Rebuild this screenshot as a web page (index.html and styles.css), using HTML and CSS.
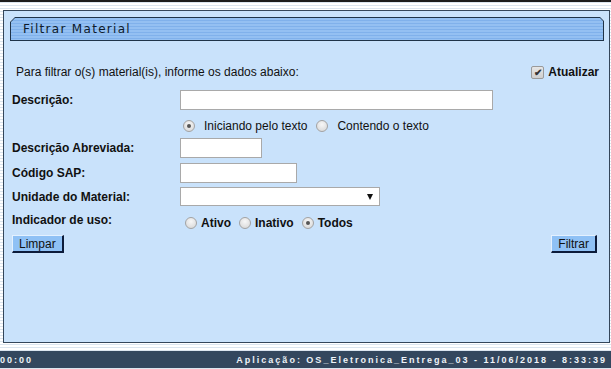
FILE: index.html
```html
<!DOCTYPE html>
<html lang="pt-BR">
<head>
  <meta charset="UTF-8">
  <meta name="viewport" content="width=device-width, initial-scale=1.0">
  <title>Filtrar Material</title>
  <link rel="stylesheet" href="styles.css">
</head>
<body>
  <div class="topline"></div>

  <div class="panel">
    <div class="tab">
      <div class="tab-inner">Filtrar Material</div>
    </div>

    <div class="intro-row">
      <span>Para filtrar o(s) material(is), informe os dados abaixo:</span>
      <label class="check"><span class="checkbox">&#10004;</span>Atualizar</label>
    </div>

    <div class="form">
      <div class="row row-desc">
        <span class="label">Descrição:</span>
        <span class="input input-desc"></span>
      </div>
      <div class="row row-mode">
        <span class="label"></span>
        <span class="radio on"></span><span class="opt">Iniciando pelo texto</span>
        <span class="radio"></span><span class="opt">Contendo o texto</span>
      </div>
      <div class="row row-abrev">
        <span class="label">Descrição Abreviada:</span>
        <span class="input input-abrev"></span>
      </div>
      <div class="row row-sap">
        <span class="label">Código SAP:</span>
        <span class="input input-sap"></span>
      </div>
      <div class="row row-unit">
        <span class="label">Unidade do Material:</span>
        <span class="select"><span class="arrow"></span></span>
      </div>
      <div class="row row-use">
        <span class="label label-use">Indicador de uso:</span>
        <span class="use-options">
          <span class="radio"></span><span class="opt-bold">Ativo</span>
          <span class="radio"></span><span class="opt-bold">Inativo</span>
          <span class="radio on"></span><span class="opt-bold">Todos</span>
        </span>
      </div>
    </div>

    <div class="actions">
      <button class="btn">Limpar</button>
      <button class="btn">Filtrar</button>
    </div>
  </div>

  <div class="statusbar">
    <span>00:00</span>
    <span>Aplicação: OS_Eletronica_Entrega_03 - 11/06/2018 - 8:33:39</span>
  </div>
</body>
</html>
```

FILE: styles.css
```css
body {
  margin: 0;
  width: 611px;
  height: 369px;
  overflow: hidden;
  font-family: 'Liberation Sans', Arial, sans-serif;
  font-size: 12px;
  color: #111;
  background: repeating-linear-gradient(to bottom, #ffffff 0 2px, #dbe5ef 2px 3px);
}

.topline {
  height: 2px;
  background: #1c1c1c;
}

.panel {
  margin: 8px 1px 0 3px;
  height: 331px;
  border: 1px solid #34465a;
  background: #c9e2fb;
  box-sizing: content-box;
}

.tab {
  margin: 6px 5px 0 6px;
  height: 24px;
  background: #1f3348;
  clip-path: polygon(5px 0, calc(100% - 4px) 0, 100% 4px, 100% 100%, 0 100%, 0 5px);
}

.tab-inner {
  height: 22px;
  margin: 0 1px;
  position: relative;
  top: 1px;
  background: repeating-linear-gradient(to bottom, #94c0f2 0 2px, #80b1eb 2px 3px);
  clip-path: polygon(4px 0, calc(100% - 3px) 0, 100% 3px, 100% 100%, 0 100%, 0 4px);
  font-family: 'DejaVu Sans', Verdana, sans-serif;
  font-size: 12px;
  letter-spacing: 1.3px;
  line-height: 22px;
  padding-left: 12px;
  color: #0d1a2b;
}

.intro-row {
  margin-top: 21px;
  height: 20px;
  padding: 0 10px 0 12px;
  display: flex;
  align-items: center;
  justify-content: space-between;
}

.check {
  display: flex;
  align-items: center;
  font-weight: bold;
}

.checkbox {
  width: 11px;
  height: 11px;
  margin-right: 4px;
  border: 1px solid #9a9a9a;
  border-radius: 2px;
  background: linear-gradient(#e6e6e6, #cfcfcf);
  font-size: 10px;
  line-height: 11px;
  text-align: center;
  color: #333;
}

.form {
  padding-left: 8px;
}

.row {
  display: flex;
  align-items: center;
  height: 20px;
}

.row-desc { margin-top: 8px; }
.row-mode { margin-top: 6px; }
.row-abrev { margin-top: 2px; }
.row-sap { margin-top: 5px; }
.row-unit { margin-top: 4px; height: 19px; }
.row-use { margin-top: 5px; }

.label {
  width: 168px;
  flex: none;
  font-weight: bold;
}

.label-use {
  position: relative;
  top: -1px;
}

.input {
  height: 18px;
  background: #fff;
  border: 1px solid #a9a9a9;
}

.input-desc { width: 311px; }
.input-abrev { width: 80px; }
.input-sap { width: 115px; }

.select {
  width: 198px;
  height: 17px;
  background: #fff;
  border: 1px solid #a9a9a9;
  display: flex;
  align-items: center;
  justify-content: flex-end;
}

.arrow {
  width: 0;
  height: 0;
  margin-right: 6px;
  border-left: 3.5px solid transparent;
  border-right: 3.5px solid transparent;
  border-top: 6px solid #111;
}

.radio {
  width: 10px;
  height: 10px;
  flex: none;
  border: 1px solid #a3a3a3;
  border-radius: 50%;
  background: radial-gradient(circle at 50% 35%, #f7f7f7, #d4d4d4);
  position: relative;
}

.radio.on::after {
  content: "";
  position: absolute;
  left: 3px;
  top: 3px;
  width: 4px;
  height: 4px;
  border-radius: 50%;
  background: #555;
}

.row-mode .radio { margin: 0 9px 0 3px; }
.opt { margin-right: 6px; }

.use-options {
  display: flex;
  align-items: center;
  position: relative;
  top: 2px;
  padding-left: 5px;
}

.use-options .radio { margin-right: 4px; }

.opt-bold {
  font-weight: bold;
  margin-right: 8px;
}

.actions {
  margin-top: 4px;
  padding: 0 12px 0 8px;
  display: flex;
  justify-content: space-between;
}

.btn {
  height: 18px;
  padding: 0 6px;
  font-family: 'Liberation Sans', Arial, sans-serif;
  font-size: 12px;
  color: #111;
  background: #8fc1f5;
  border-style: solid;
  border-width: 1px 2px 2px 1px;
  border-color: #e4f1ff #0c1b3a #0c1b3a #e4f1ff;
  line-height: 14px;
}

.statusbar {
  margin-top: 8px;
  height: 17px;
  background: #33475e;
  color: #eef3f8;
  display: flex;
  justify-content: space-between;
  align-items: center;
  padding-right: 4px;
  font-size: 9px;
  font-weight: bold;
  letter-spacing: 2px;
}
```
